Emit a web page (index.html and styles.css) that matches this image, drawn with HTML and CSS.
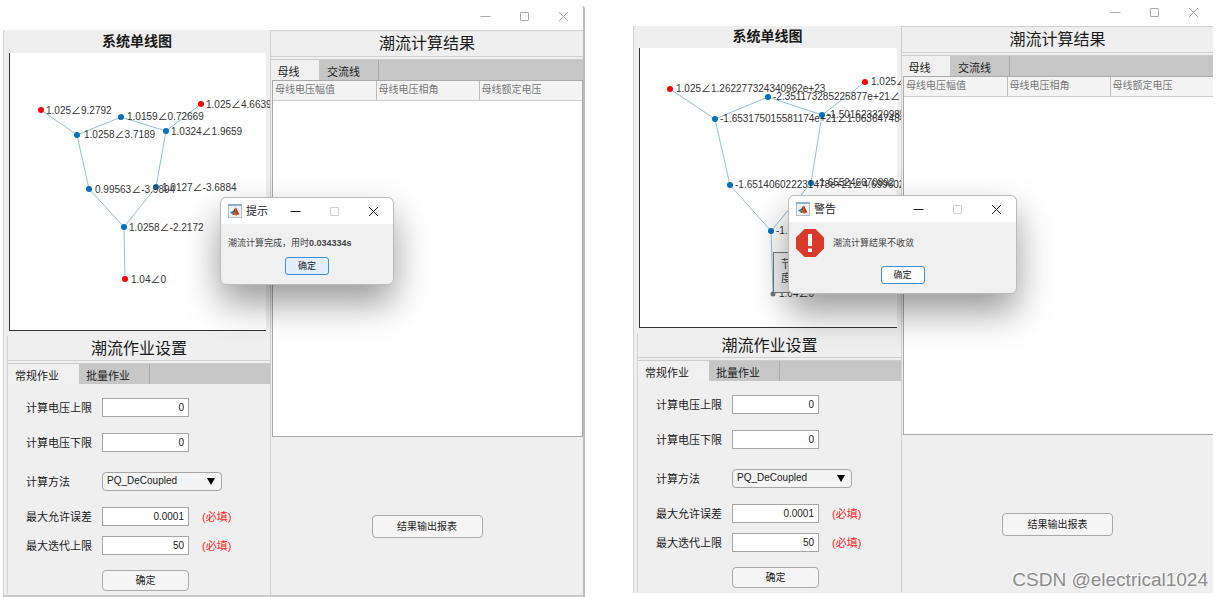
FILE: index.html
```html
<!DOCTYPE html>
<html lang="zh-CN">
<head>
<meta charset="utf-8">
<title>潮流计算</title>
<link rel="stylesheet" href="styles.css">
</head>
<body>
<svg class="defs" aria-hidden="true">
  <defs>
    <symbol id="i-min" viewBox="0 0 11 11"><path d="M0.500 5.500H10.500" stroke="currentColor" fill="none"/></symbol>
    <symbol id="i-max" viewBox="0 0 11 11"><rect x="1.500" y="1.500" width="8" height="8" rx="0.500" stroke="currentColor" fill="none"/></symbol>
    <symbol id="i-close" viewBox="0 0 11 11"><path d="M1 1L10 10M10 1L1 10" stroke="currentColor" fill="none"/></symbol>
    <symbol id="i-matlab" viewBox="0 0 14 14">
      <rect x="0.500" y="0.500" width="13" height="13" fill="#eef1f4" stroke="#b4bdc6"/>
      <path d="M0 0H14V2H0Z" fill="#8fb0cb"/>
      <path d="M2 8.300L4.800 6.900L6 8.800L4.300 10.200Z" fill="#2f7fb8"/>
      <path d="M4.800 6.900C6 6.600 6.500 4.500 7.500 3.400L7 8.500L5.800 11L4.300 10.200L6 8.800Z" fill="#263f63"/>
      <path d="M7.500 3.400C9 4.200 9.600 8.200 12.200 10.900C10.600 9.900 9.500 10.200 8 12C7.500 11.200 6.800 10.800 5.500 10.800C6.600 8.500 6.600 5.500 7.500 3.400Z" fill="#e2581c"/>
      <path d="M7.700 3.600C9.200 5 9.400 8.200 11 10.300C10 10 9.300 10.500 8.700 11.200C8.700 8.500 8.500 6 7.700 3.600Z" fill="#a5331a"/>
    </symbol>
  </defs>
</svg>
<main class="page">
  <section class="window window-a">
    <header class="titlebar">
      <button class="win-btn" aria-label="最小化"><svg><use href="#i-min"/></svg></button>
      <button class="win-btn" aria-label="最大化"><svg><use href="#i-max"/></svg></button>
      <button class="win-btn" aria-label="关闭"><svg><use href="#i-close"/></svg></button>
    </header>
    <div class="content">
      <div class="left">
        <h2 class="plot-title">系统单线图</h2>
        <div class="plot">
          <svg class="graph">
            <g class="edges">
              <path d="M31 57L67 82L111 64L156 78L191 51M67 82L79 136L114 174L146 134L156 78M114 174L115 226"/>
            </g>
            <g class="buses">
              <circle cx="67" cy="82" r="3"/><circle cx="111" cy="64" r="3"/><circle cx="156" cy="78" r="3"/>
              <circle cx="79" cy="136" r="3"/><circle cx="146" cy="134" r="3"/><circle cx="114" cy="174" r="3"/>
            </g>
            <g class="gens"><circle cx="31" cy="57" r="3"/><circle cx="191" cy="51" r="3"/><circle cx="115" cy="226" r="3"/></g>
            <g class="values">
              <text x="36" y="61">1.025∠9.2792</text>
              <text x="196" y="55">1.025∠4.6639</text>
              <text x="117" y="67">1.0159∠0.72669</text>
              <text x="74" y="85">1.0258∠3.7189</text>
              <text x="161" y="82">1.0324∠1.9659</text>
              <text x="85" y="140">0.99563∠-3.9894</text>
              <text x="152" y="138">1.0127∠-3.6884</text>
              <text x="119" y="178">1.0258∠-2.2172</text>
              <text x="121" y="230">1.04∠0</text>
            </g>
          </svg>
        </div>
        <div class="job">
          <h2 class="panel-title">潮流作业设置</h2>
          <div class="tabs" role="tablist">
            <button class="tab job-tab active" role="tab" aria-selected="true">常规作业</button>
            <button class="tab job-tab" role="tab" aria-selected="false">批量作业</button>
          </div>
          <form class="form">
            <div class="row"><label for="a-up">计算电压上限</label><input id="a-up" type="text" value="0"></div>
            <div class="row row-gap"><label for="a-low">计算电压下限</label><input id="a-low" type="text" value="0"></div>
            <div class="row row-wide"><label for="a-method">计算方法</label><span class="select"><select id="a-method"><option>PQ_DeCoupled</option></select><svg class="arrow" viewBox="0 0 8 7"><path d="M0 0H8L4 7Z"/></svg></span></div>
            <div class="row row-gap"><label for="a-err">最大允许误差</label><input id="a-err" type="text" value="0.0001"><span class="required">(必填)</span></div>
            <div class="row row-near"><label for="a-iter">最大迭代上限</label><input id="a-iter" type="text" value="50"><span class="required">(必填)</span></div>
            <div class="row row-gap"><span></span><button class="btn" type="button">确定</button></div>
          </form>
        </div>
      </div>
      <div class="right">
        <h2 class="panel-title result-title">潮流计算结果</h2>
        <div class="tabs" role="tablist">
          <button class="tab bus-tab active" role="tab" aria-selected="true">母线</button>
          <button class="tab line-tab" role="tab" aria-selected="false">交流线</button>
        </div>
        <div class="table-area">
          <table><thead><tr><th>母线电压幅值</th><th>母线电压相角</th><th>母线额定电压</th></tr></thead></table>
        </div>
        <div class="export"><button class="btn btn-export" type="button">结果输出报表</button></div>
      </div>
    </div>
    <div class="dialog dialog-info" role="dialog" aria-labelledby="dlg-a">
      <header class="dialog-bar">
        <svg class="logo"><use href="#i-matlab"/></svg><h3 id="dlg-a">提示</h3>
        <button class="win-btn" aria-label="最小化"><svg><use href="#i-min"/></svg></button>
        <button class="win-btn disabled" aria-label="最大化" disabled><svg><use href="#i-max"/></svg></button>
        <button class="win-btn" aria-label="关闭"><svg><use href="#i-close"/></svg></button>
      </header>
      <div class="dialog-body">
        <p>潮流计算完成，用时<b>0.034334s</b></p>
        <button class="ok ok-hover" type="button">确定</button>
      </div>
    </div>
  </section>

  <section class="window window-b">
    <header class="titlebar">
      <button class="win-btn" aria-label="最小化"><svg><use href="#i-min"/></svg></button>
      <button class="win-btn" aria-label="最大化"><svg><use href="#i-max"/></svg></button>
      <button class="win-btn" aria-label="关闭"><svg><use href="#i-close"/></svg></button>
    </header>
    <div class="content">
      <div class="left">
        <h2 class="plot-title">系统单线图</h2>
        <div class="plot">
          <svg class="graph">
            <g class="edges">
              <path d="M30 41L75 71L128 49L182 67L225 34M75 71L90 137L131 183L171 135L182 67M131 183L133 246"/>
            </g>
            <g class="buses">
              <circle cx="75" cy="71" r="3"/><circle cx="128" cy="49" r="3"/><circle cx="182" cy="67" r="3"/>
              <circle cx="90" cy="137" r="3"/><circle cx="171" cy="135" r="3"/><circle cx="131" cy="183" r="3"/>
            </g>
            <g class="gens"><circle cx="30" cy="41" r="3"/><circle cx="225" cy="34" r="3"/></g>
            <g class="values">
              <text x="36" y="44">1.025∠1.262277324340962e+23</text>
              <text x="231" y="37">1.025∠4.1</text>
              <text x="133" y="52">-2.351173285225877e+21∠</text>
              <text x="80" y="74">-1.653175015581174e+21∠1.063647484</text>
              <text x="187" y="70">-1.501623320985</text>
              <text x="95" y="140">-1.651406022231478e+21∠4.699602</text>
              <text x="176" y="138">-1.655246670892</text>
              <text x="136" y="186">-1.651</text>
              <text x="139" y="249">1.04∠0</text>
            </g>
          </svg>
          <div class="datatip">节点<br>度</div>
          <svg class="tip-anchor" viewBox="0 0 6 6"><circle cx="3" cy="3" r="2.500"/></svg>
        </div>
        <div class="job">
          <h2 class="panel-title">潮流作业设置</h2>
          <div class="tabs" role="tablist">
            <button class="tab job-tab active" role="tab" aria-selected="true">常规作业</button>
            <button class="tab job-tab" role="tab" aria-selected="false">批量作业</button>
          </div>
          <form class="form">
            <div class="row"><label for="b-up">计算电压上限</label><input id="b-up" type="text" value="0"></div>
            <div class="row row-gap"><label for="b-low">计算电压下限</label><input id="b-low" type="text" value="0"></div>
            <div class="row row-wide"><label for="b-method">计算方法</label><span class="select"><select id="b-method"><option>PQ_DeCoupled</option></select><svg class="arrow" viewBox="0 0 8 7"><path d="M0 0H8L4 7Z"/></svg></span></div>
            <div class="row row-gap"><label for="b-err">最大允许误差</label><input id="b-err" type="text" value="0.0001"><span class="required">(必填)</span></div>
            <div class="row row-near"><label for="b-iter">最大迭代上限</label><input id="b-iter" type="text" value="50"><span class="required">(必填)</span></div>
            <div class="row row-gap"><span></span><button class="btn" type="button">确定</button></div>
          </form>
        </div>
      </div>
      <div class="right">
        <h2 class="panel-title result-title">潮流计算结果</h2>
        <div class="tabs" role="tablist">
          <button class="tab bus-tab active" role="tab" aria-selected="true">母线</button>
          <button class="tab line-tab" role="tab" aria-selected="false">交流线</button>
        </div>
        <div class="table-area">
          <table><thead><tr><th>母线电压幅值</th><th>母线电压相角</th><th>母线额定电压</th></tr></thead></table>
        </div>
        <div class="export"><button class="btn btn-export" type="button">结果输出报表</button></div>
      </div>
    </div>
    <div class="dialog dialog-warn" role="dialog" aria-labelledby="dlg-b">
      <header class="dialog-bar">
        <svg class="logo"><use href="#i-matlab"/></svg><h3 id="dlg-b">警告</h3>
        <button class="win-btn" aria-label="最小化"><svg><use href="#i-min"/></svg></button>
        <button class="win-btn disabled" aria-label="最大化" disabled><svg><use href="#i-max"/></svg></button>
        <button class="win-btn" aria-label="关闭"><svg><use href="#i-close"/></svg></button>
      </header>
      <div class="dialog-body">
        <div class="message">
          <svg class="alert" viewBox="0 0 28 28"><path d="M8.500 0H19.500L28 8.500V19.500L19.500 28H8.500L0 19.500V8.500Z" fill="#da3a2b"/><path d="M12 5H16V17H12ZM12 19.500H16V23H12Z" fill="#fff"/></svg>
          <p>潮流计算结果不收敛</p>
        </div>
        <button class="ok" type="button">确定</button>
      </div>
    </div>
    <div class="watermark">CSDN @electrical1024</div>
  </section>
</main>
</body>
</html>
```
FILE: styles.css
```css
* { box-sizing: border-box; }
body {
  margin: 0;
  background: #fff;
  color: #1a1a1a;
  font-family: "Liberation Sans", "Noto Sans CJK SC", sans-serif;
  font-size: 11px;
  line-height: 16px;
}
h2, h3, p { margin: 0; font-weight: 400; }
button, input, select { font: inherit; color: inherit; margin: 0; }
.defs { position: absolute; width: 0; height: 0; }

.page {
  display: grid;
  grid-template-columns: 582fr 580fr;
  column-gap: 48px;
  min-height: 100vh;
  padding: 0 10px 0 3px;
  overflow: hidden;
}

/* Application windows */
.window { position: relative; display: flex; flex-direction: column; min-width: 0; --left: 267px; --plot: 278px; }
.window-a { margin-top: 6px; border-right: 2px solid #bbb; border-top-right-radius: 3px; }
.window-b { margin: 2px 0 4px; --left: 268px; --plot: 280px; }
.titlebar {
  display: flex;
  align-items: center;
  justify-content: flex-end;
  gap: 28px;
  height: 24px;
  padding: 0 14px 3px 0;
  color: #aaa;
}
.win-btn { display: flex; padding: 0; border: 0; background: none; }
.win-btn svg { width: 11px; height: 11px; }
.content {
  flex: 1;
  display: grid;
  grid-template-columns: var(--left) 1fr;
  background: #efefef;
}
.window-a .content { border-bottom: 2px solid #ccc; }
.left { border-left: 1px solid #d2d2d2; min-width: 0; overflow: hidden; }
.plot-title { height: 23px; text-align: center; font-size: 14px; line-height: 23px; font-weight: 700; }
.window-b .plot-title { height: 22px; line-height: 20px; }
.plot {
  position: relative;
  height: var(--plot);
  margin: 0 4px 0 5px;
  background: #fff;
  border-left: 1px solid #333;
  border-bottom: 1px solid #333;
}
.graph { display: block; width: 100%; height: 100%; overflow: visible; }
.edges { fill: none; stroke: #8dc0e2; stroke-width: 1; }
.buses { fill: #0072bd; }
.gens { fill: #f00; }
.values { fill: #333; font-size: 10px; }
.datatip {
  position: absolute;
  left: 133px;
  top: 204px;
  width: 64px;
  height: 41px;
  padding: 4px 7px;
  border: 1px solid #777;
  background: #f3f3f7;
  color: #444;
  font-size: 11px;
  line-height: 14px;
}
.tip-anchor { position: absolute; left: 130px; top: 243px; width: 6px; height: 6px; fill: #777; }

/* Panels and tabs */
.job { margin-top: 5px; margin-left: 3px; border-left: 1px solid #d2d2d2; }
.panel-title {
  height: 25px;
  border-bottom: 1px solid #d0d0d0;
  font-size: 16px;
  line-height: 25px;
  text-align: center;
}
.result-title { height: 27px; border-top: 1px solid #d0d0d0; line-height: 26px; }
.tabs { display: flex; height: 21px; margin-top: 2px; background: #c6c6c6; border-top: 1px solid #ccc; }
.tab { padding: 3px 0 0; border: 0; border-right: 1px solid #aaa; background: #c6c6c6; line-height: 16px; }
.active { background: #f0f0f0; border-right-color: #f0f0f0; }
.job-tab { width: 71px; padding-right: 12px; }
.bus-tab { width: 48px; padding-right: 12px; }
.line-tab { width: 60px; padding-right: 10px; }

.form { padding: 13px 0 5px 18px; }
.row { display: grid; grid-template-columns: 76px 87px auto; align-items: center; height: 20px; }
.row-gap { margin-top: 15px; }
.row-wide { margin-top: 19px; grid-template-columns: 76px 120px; }
.row-near { margin-top: 9px; }
.row label, .required { padding-top: 2px; }
.row input { width: 100%; height: 19px; padding: 0 4px; border: 1px solid #a6a6a6; background: #fff; text-align: right; font-size: 10px; }
.required { padding-left: 13px; color: #f22; }
.select { position: relative; }
.select select {
  appearance: none;
  display: block;
  width: 100%;
  height: 19px;
  padding: 0 4px;
  border: 1px solid #a6a6a6;
  border-radius: 4px;
  background: #f4f4f4;
  font-size: 10px;
}
.arrow { position: absolute; right: 7px; top: 6px; width: 8px; height: 7px; pointer-events: none; }
.btn { height: 21px; padding: 0; border: 1px solid #a9a9a9; border-radius: 4px; background: #f5f5f5; font-size: 10px; }

/* Results */
.right { display: flex; flex-direction: column; min-width: 0; border-left: 1px solid #d0d0d0; }
.table-area { flex: 1; margin-left: 1px; background: #fff; border: solid #aaa; border-width: 1px 0 1px 1px; }
.window-a .table-area { border-right-width: 1px; }
table { width: 100%; table-layout: fixed; border-collapse: collapse; }
th {
  height: 19px;
  padding: 0 2px;
  border-right: 1px solid #bbb;
  border-bottom: 1px solid #ccc;
  background: #f4f4f4;
  color: #777;
  font-size: 10px;
  line-height: 16px;
  font-weight: 400;
  text-align: left;
}
th:last-child { border-right: 0; }
.export { display: flex; justify-content: center; height: 158px; padding-top: 78px; }
.btn-export { width: 111px; height: 23px; }

/* Message boxes */
.dialog {
  position: absolute;
  border: 1px solid #bbb;
  border-radius: 6px;
  background: #f0f0f0;
  box-shadow: 0 18px 36px rgba(0, 0, 0, .4);
}
.dialog-info { left: 217px; top: 191px; width: 174px; }
.dialog-warn { left: 155px; top: 193px; width: 229px; }
.dialog-bar {
  display: flex;
  align-items: center;
  gap: 28px;
  height: 26px;
  padding: 0 14px 0 7px;
  border-radius: 6px 6px 0 0;
  background: #fff;
}
.logo { flex: none; width: 14px; height: 14px; }
.dialog-bar h3 { flex: 1; min-width: 0; margin-left: -24px; font-size: 11px; white-space: nowrap; }
.dialog-info .dialog-bar h3 { margin-right: -8px; }
.disabled { color: #ccc; }
.dialog-body { display: flex; flex-direction: column; align-items: center; padding: 11px 7px 9px; }
.dialog-body p { align-self: flex-start; color: #444; font-size: 9px; line-height: 16px; }
.ok { width: 44px; height: 18px; margin-top: 6px; padding: 0; border: 1px solid #3c8fd4; border-radius: 3px; background: #fdfdfd; font-size: 9px; line-height: 14px; }
.ok-hover { background: #e2eefa; }
.message { display: flex; align-items: center; gap: 9px; align-self: flex-start; }
.message p { align-self: center; }
.alert { width: 28px; height: 28px; }
.dialog-warn .dialog-body { padding-top: 7px; }
.dialog-warn .ok { margin-top: 9px; }

.watermark {
  position: absolute;
  right: 5px;
  bottom: 2px;
  color: #8c8c8c;
  font-size: 19px;
  line-height: 22px;
  text-shadow: -1px -1px 0 #fff;
}
```
